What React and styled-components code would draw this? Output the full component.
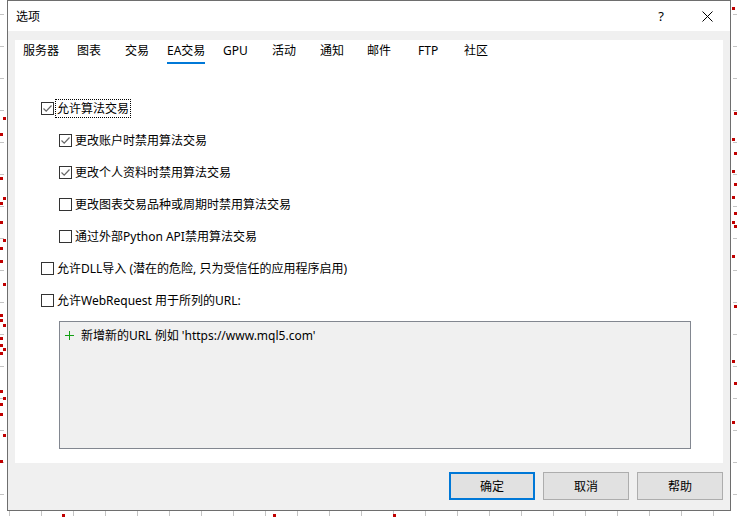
import React from "react"
import styled, { createGlobalStyle } from "styled-components"

const tabs = [
  { label: "服务器", width: 54 },
  { label: "图表", width: 48 },
  { label: "交易", width: 42 },
  { label: "EA交易", width: 56, active: true },
  { label: "GPU", width: 49 },
  { label: "活动", width: 48 },
  { label: "通知", width: 47 },
  { label: "邮件", width: 51 },
  { label: "FTP", width: 46 },
  { label: "社区", width: 40 },
]

const options = [
  { label: "允许算法交易", checked: true, focused: true },
  { label: "更改账户时禁用算法交易", checked: true, nested: true },
  { label: "更改个人资料时禁用算法交易", checked: true, nested: true },
  { label: "更改图表交易品种或周期时禁用算法交易", nested: true },
  { label: "通过外部Python API禁用算法交易", nested: true },
  { label: "允许DLL导入 (潜在的危险, 只为受信任的应用程序启用)" },
  { label: "允许WebRequest 用于所列的URL:" },
]

// chart bits peeking out behind the dialog
const tickRows = Array.from({ length: 16 }, (_, i) => 14 + i * 32)
const tickCols = Array.from({ length: 23 }, (_, i) => 9 + i * 32)
const leftDots = [117, 133, 177, 197, 202, 221, 239, 247, 260, 283, 314, 319, 324, 337, 344, 348, 352, 390, 397, 403, 413, 434, 460]
const rightDots = [7, 112, 138, 152, 170, 183, 196, 212, 221, 225, 255, 305, 360, 382, 421]
const bottomDots = [62, 273, 393]

const Checkbox = ({ checked }) => (
  <Box>
    {checked && (
      <svg width="11" height="11" viewBox="0 0 11 11">
        <path d="M1.5 5.5 L4.2 8.2 L9.5 2.5" fill="none" stroke="#666" strokeWidth="1.2" />
      </svg>
    )}
  </Box>
)

const App = () => {
  return (
    <>
      <GlobalStyle />
      <Desktop>
        <Backdrop width="738" height="518">
          {tickRows.map((y) => (
            <g key={y}>
              <line x1="0" y1={y + 0.5} x2="4" y2={y + 0.5} stroke="#c4c4c4" />
              <line x1="733" y1={y + 0.5} x2="737" y2={y + 0.5} stroke="#c4c4c4" />
            </g>
          ))}
          {tickCols.map((x) => (
            <line key={x} x1={x + 0.5} y1="511" x2={x + 0.5} y2="516" stroke="#c4c4c4" />
          ))}
          {leftDots.map((y, i) => (
            <rect key={y} x={i % 3 === 0 ? 3 : 0} y={y} width="3" height="3" fill="#c00000" />
          ))}
          {rightDots.map((y, i) => (
            <rect key={y} x={i % 2 ? 734 : 732} y={y} width="3" height="3" fill="#c00000" />
          ))}
          {bottomDots.map((x) => (
            <rect key={x} x={x} y="514" width="3" height="3" fill="#c00000" />
          ))}
        </Backdrop>

        <Window>
          <TitleBar>
            <Title>选项</Title>
            <CaptionButton>?</CaptionButton>
            <CaptionButton>
              <svg width="11" height="11" viewBox="0 0 11 11">
                <path d="M0.5 0.5 L10.5 10.5 M10.5 0.5 L0.5 10.5" stroke="#000" strokeWidth="1" />
              </svg>
            </CaptionButton>
          </TitleBar>

          <Body>
            <Panel>
              <TabBar>
                {tabs.map((tab) => (
                  <Tab key={tab.label} $width={tab.width}>
                    <TabLabel $active={tab.active}>{tab.label}</TabLabel>
                  </Tab>
                ))}
              </TabBar>

              <Options>
                {options.map((opt) => (
                  <CheckRow key={opt.label} $nested={opt.nested}>
                    <Checkbox checked={opt.checked} />
                    <CheckLabel $focused={opt.focused}>{opt.label}</CheckLabel>
                  </CheckRow>
                ))}
              </Options>

              <UrlList>
                <UrlItem>
                  <svg width="9" height="9" viewBox="0 0 9 9" shapeRendering="crispEdges">
                    <rect x="4" y="0" width="1" height="9" fill="#12a012" />
                    <rect x="0" y="4" width="9" height="1" fill="#12a012" />
                  </svg>
                  <span>新增新的URL 例如 'https://www.mql5.com'</span>
                </UrlItem>
              </UrlList>
            </Panel>

            <ButtonRow>
              <Button $primary>确定</Button>
              <Button>取消</Button>
              <Button>帮助</Button>
            </ButtonRow>
          </Body>
        </Window>
      </Desktop>
    </>
  )
}

const GlobalStyle = createGlobalStyle`
  html, body {
    margin: 0;
    padding: 0;
    background: #fff;
  }

  body {
    font-family: "Noto Sans", "Noto Sans CJK SC", sans-serif;
    font-size: 12px;
    color: #000;
  }
`

const Desktop = styled.div`
  position: relative;
  width: 738px;
  height: 518px;
  overflow: hidden;
  background: #fff;
`

const Backdrop = styled.svg`
  position: absolute;
  top: 0;
  left: 0;
`

const Window = styled.div`
  position: absolute;
  top: 0;
  left: 7px;
  width: 724px;
  height: 511px;
  box-sizing: border-box;
  border: 1px solid #6e6e6e;
  background: #f0f0f0;
  display: flex;
  flex-direction: column;
`

const TitleBar = styled.div`
  display: flex;
  align-items: center;
  height: 30px;
  padding-left: 8px;
  background: #fff;
`

const Title = styled.div`
  flex: 1;
  line-height: 18px;
  padding-top: 1px;
`

const CaptionButton = styled.div`
  display: flex;
  align-items: center;
  justify-content: center;
  width: 46px;
  height: 30px;
  font-size: 13px;
`

const Body = styled.div`
  flex: 1;
  display: flex;
  flex-direction: column;
  padding: 9px 7px 10px;
`

const Panel = styled.div`
  flex: 1;
  display: flex;
  flex-direction: column;
  background: #fff;
`

const TabBar = styled.div`
  display: flex;
  padding-left: 8px;
`

const Tab = styled.div`
  width: ${(p) => p.$width}px;
  padding-top: 2px;
`

const TabLabel = styled.span`
  display: inline-block;
  line-height: 18px;
  padding-bottom: 2px;
  border-bottom: 2px solid ${(p) => (p.$active ? "#0078d7" : "transparent")};
`

const Options = styled.div`
  display: flex;
  flex-direction: column;
  margin-top: 28px;
  padding-left: 26px;
`

const CheckRow = styled.div`
  display: flex;
  align-items: center;
  height: 32px;
  padding-left: ${(p) => (p.$nested ? 18 : 0)}px;
`

const Box = styled.span`
  display: flex;
  align-items: center;
  justify-content: center;
  width: 13px;
  height: 13px;
  box-sizing: border-box;
  border: 1px solid #333;
  background: #fff;
`

const CheckLabel = styled.span`
  margin-left: 2px;
  padding: 1px 1px 0;
  line-height: 16px;
  outline: ${(p) => (p.$focused ? "1px dotted #000" : "none")};
`

const UrlList = styled.div`
  height: 128px;
  margin: 5px 32px 0 44px;
  box-sizing: border-box;
  border: 1px solid #828790;
  background: #f0f0f0;
  padding: 4px 5px;
`

const UrlItem = styled.div`
  display: flex;
  align-items: center;
  gap: 7px;
  height: 18px;
`

const ButtonRow = styled.div`
  display: flex;
  justify-content: flex-end;
  gap: 8px;
  margin-top: 9px;
`

const Button = styled.button`
  width: 86px;
  height: 28px;
  box-sizing: border-box;
  background: #e1e1e1;
  border: ${(p) => (p.$primary ? "2px solid #0078d7" : "1px solid #adadad")};
  font-family: inherit;
  font-size: 12px;
  color: #000;
  padding: 0;
`

export default App
